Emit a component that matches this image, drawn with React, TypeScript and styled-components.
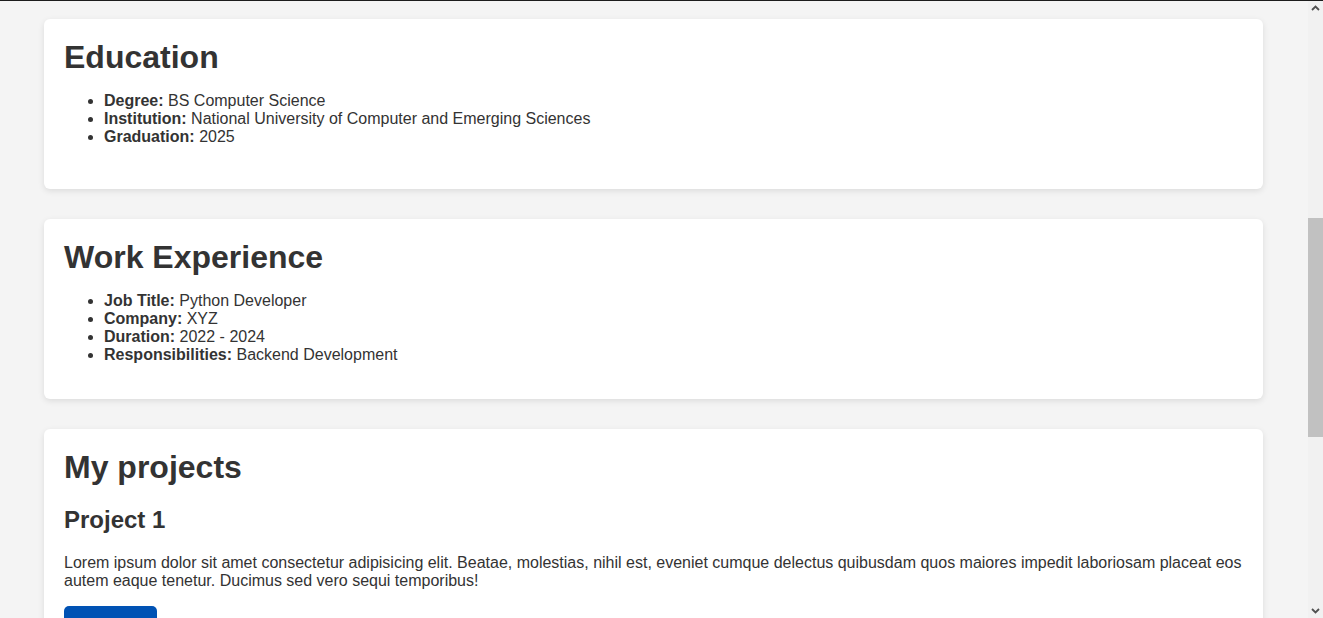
import React from "react";
import styled, { createGlobalStyle } from "styled-components";

const GlobalStyle = createGlobalStyle`
  html, body {
    margin: 0;
    padding: 0;
    overflow: hidden;
  }
  body {
    background: #f4f4f4;
    color: #333;
    font-family: "Liberation Sans", Arial, Helvetica, sans-serif;
    font-size: 16px;
  }
`;

const TopEdge = styled.div`
  height: 1px;
  background: #1c1c1c;
`;

const Window = styled.div`
  display: flex;
  height: 617px;
`;

const Viewport = styled.div`
  flex: 1;
  min-width: 0;
  overflow: hidden;
`;

const Main = styled.main`
  display: flex;
  flex-direction: column;
  gap: 30px;
  padding: 18px 45px 30px 44px;
`;

const Card = styled.section`
  background: #fff;
  border-radius: 6px;
  box-shadow: 0 2px 6px rgba(0, 0, 0, 0.1);
  padding: 20px 20px 20px;
`;

const Title = styled.h1`
  font-size: 32px;
  font-weight: 700;
  line-height: normal;
  margin: 0 0 16px;
`;

const SubTitle = styled.h2`
  font-size: 24px;
  font-weight: 700;
  line-height: normal;
  margin: 20px 0 20px;
`;

const List = styled.ul<{ $after: number }>`
  margin: 0 0 ${(p) => p.$after}px;
  padding-left: 40px;
  line-height: normal;
`;

const Item = styled.li`
  font-size: 16px;
`;

const Label = styled.strong`
  font-weight: 700;
`;

const Text = styled.p`
  margin: 0 0 16px;
  font-size: 16px;
  line-height: normal;
`;

const Button = styled.a`
  display: inline-block;
  background: #0052b4;
  color: #fff;
  text-decoration: none;
  border-radius: 5px;
  padding: 14px 22px 10px;
  font-size: 16px;
`;

const Rail = styled.div`
  width: 15px;
  flex: none;
  background: #f1f1f1;
  display: flex;
  flex-direction: column;
`;

const Arrow = styled.div`
  height: 14px;
  display: flex;
  align-items: center;
  justify-content: center;
  color: #505050;
`;

const Track = styled.div`
  flex: 1;
  display: flex;
  flex-direction: column;
`;

const Thumb = styled.div`
  background: #c1c1c1;
  margin-top: 203px;
  height: 219px;
`;

type Row = { label: string; value: string };

const education: Row[] = [
  { label: "Degree:", value: "BS Computer Science" },
  { label: "Institution:", value: "National University of Computer and Emerging Sciences" },
  { label: "Graduation:", value: "2025" },
];

const work: Row[] = [
  { label: "Job Title:", value: "Python Developer" },
  { label: "Company:", value: "XYZ" },
  { label: "Duration:", value: "2022 - 2024" },
  { label: "Responsibilities:", value: "Backend Development" },
];

const InfoList = ({ rows, after }: { rows: Row[]; after: number }) => (
  <List $after={after}>
    {rows.map((r) => (
      <Item key={r.label}>
        <Label>{r.label}</Label> {r.value}
      </Item>
    ))}
  </List>
);

const Chevron = ({ up }: { up?: boolean }) => (
  <svg width="9" height="6" viewBox="0 0 9 6">
    <path
      d={up ? "M1 5 L4.5 1.5 L8 5" : "M1 1 L4.5 4.5 L8 1"}
      fill="none"
      stroke="currentColor"
      strokeWidth="1.8"
    />
  </svg>
);

export default function App() {
  return (
    <>
      <GlobalStyle />
      <TopEdge />
      <Window>
        <Viewport>
          <Main>
            <Card>
              <Title>Education</Title>
              <InfoList rows={education} after={23} />
            </Card>
            <Card>
              <Title>Work Experience</Title>
              <InfoList rows={work} after={15} />
            </Card>
            <Card>
              <Title>My projects</Title>
              <SubTitle>Project 1</SubTitle>
              <Text>
                Lorem ipsum dolor sit amet consectetur adipisicing elit. Beatae, molestias, nihil est, eveniet
                cumque delectus quibusdam quos maiores impedit laboriosam placeat eos autem eaque tenetur.
                Ducimus sed vero sequi temporibus!
              </Text>
              <Button href="#">Details</Button>
            </Card>
          </Main>
        </Viewport>
        <Rail>
          <Arrow>
            <Chevron up />
          </Arrow>
          <Track>
            <Thumb />
          </Track>
          <Arrow>
            <Chevron />
          </Arrow>
        </Rail>
      </Window>
    </>
  );
}
